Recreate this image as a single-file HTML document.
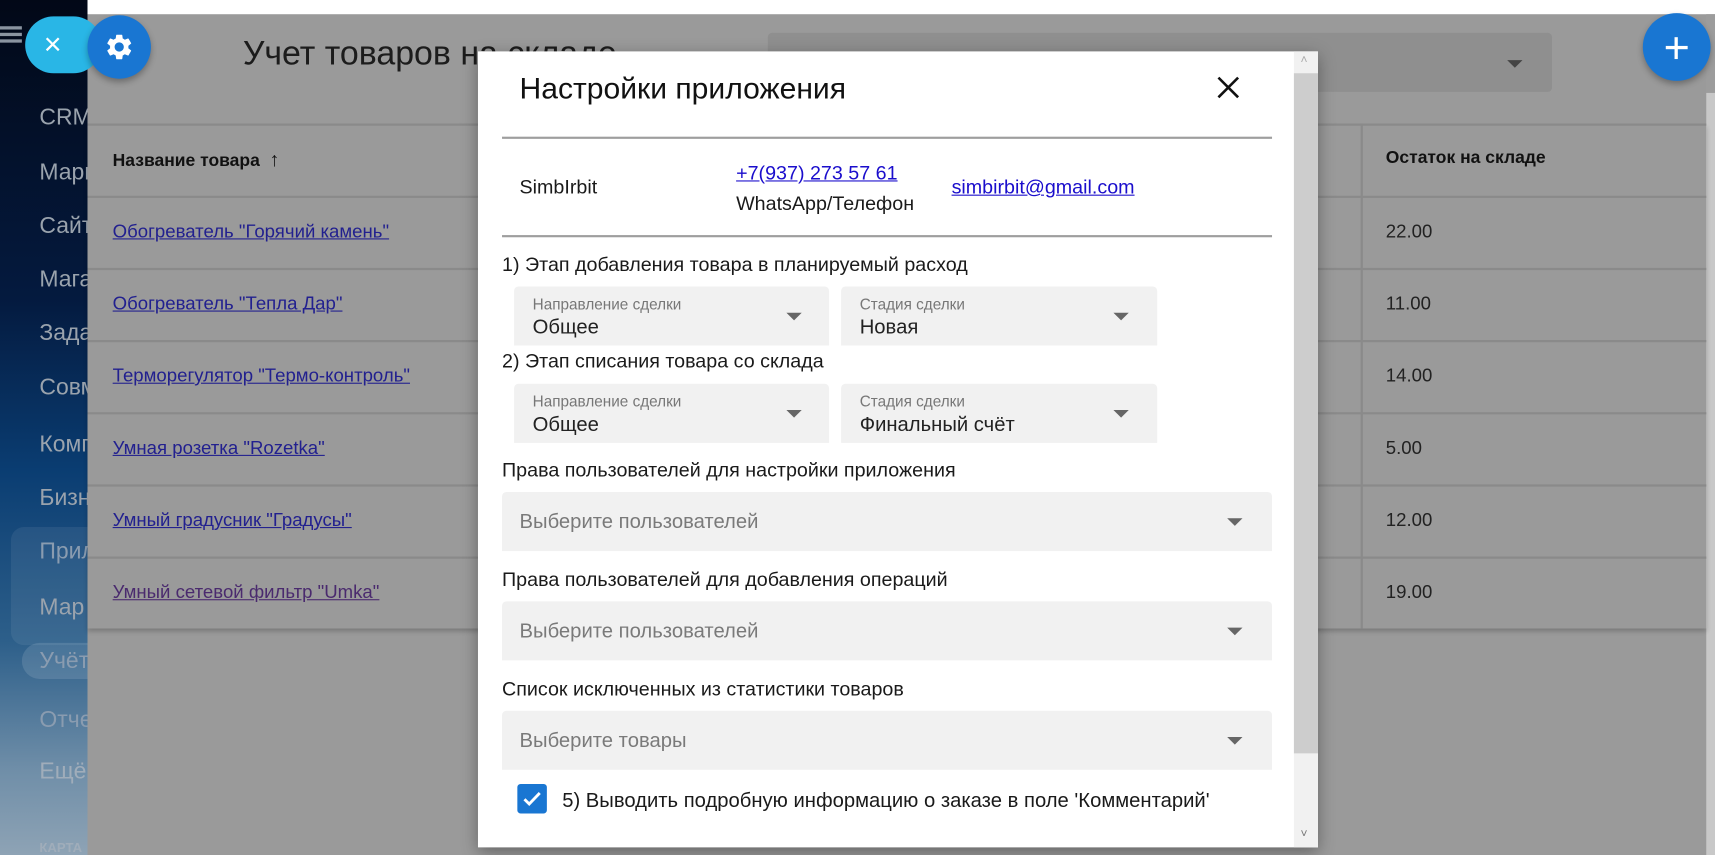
<!DOCTYPE html>
<html><head><meta charset="utf-8"><style>
*{box-sizing:border-box;margin:0;padding:0}
html,body{width:1715px;height:855px;overflow:hidden;background:#999}
#w{position:absolute;left:0;top:0;width:1568px;height:782px;transform:scale(1.09375,1.0934);transform-origin:0 0;font-family:"Liberation Sans",sans-serif;background:#9a9a9a;overflow:hidden}
.a{position:absolute}
#side{left:0;top:0;width:80px;height:782px;overflow:hidden;background:linear-gradient(180deg,#020817 0%,#041a3f 35%,#0a3d72 55%,#2d5f8a 75%,#6f8ea8 90%,#8ea3b5 100%)}
.si{position:absolute;left:36px;font-size:21px;color:#9aa3ad;white-space:nowrap}
.lk{position:absolute;left:103px;font-size:17px;color:#22208f;text-decoration:underline;white-space:nowrap}
.val{position:absolute;left:1267px;font-size:17px;color:#222}
.hl{position:absolute;left:80px;width:1480px;height:2px;background:#8a8a8a}
#modal{left:437px;top:47px;width:768px;height:728px;background:#fff;box-shadow:0 4px 14px rgba(0,0,0,.35)}
.t{position:absolute;color:#1a1a1a;font-size:18px;white-space:nowrap}
.sel{position:absolute;background:#f1f1f1;border-radius:4px 4px 0 0}
.sel .lb{position:absolute;left:17px;top:8px;font-size:14px;color:#777;white-space:nowrap}
.sel .v{position:absolute;left:17px;top:26px;font-size:18.5px;color:#222;white-space:nowrap}
.sel .ph{position:absolute;left:16px;top:16px;font-size:18.5px;color:#7a7a7a;white-space:nowrap}
.arr{position:absolute;width:0;height:0;border-left:7px solid transparent;border-right:7px solid transparent;border-top:7px solid #666}
</style></head><body><div id="w">
<div id="side" class="a">
<div class="a" style="left:0;top:30px;width:20px;height:3px;background:#8a94a0;box-shadow:0 6px 0 #8a94a0,0 -6px 0 #8a94a0"></div>
<div class="si" style="top:96px">CRM</div>
<div class="si" style="top:146px">Марк</div>
<div class="si" style="top:195px">Сайт</div>
<div class="si" style="top:244px">Мага</div>
<div class="si" style="top:293px">Зада</div>
<div class="si" style="top:343px">Совм</div>
<div class="si" style="top:395px">Комп</div>
<div class="si" style="top:444px">Бизн</div>
<div class="a" style="left:10px;top:482px;width:90px;height:108px;border-radius:12px;background:rgba(255,255,255,.07)"></div>
<div class="si" style="top:493px;color:#8a9cb0">Прил</div>
<div class="si" style="top:544px">Мар</div>
<div class="a" style="left:20px;top:588px;width:90px;height:33px;border-radius:17px;background:rgba(255,255,255,.12)"></div>
<div class="si" style="top:593px;color:#8a9cb0">Учёт</div>
<div class="si" style="top:647px;color:#8a9cb0">Отче</div>
<div class="si" style="top:694px;color:#a0adba">Ещё</div>
<div class="si" style="top:768px;font-size:12px;font-weight:bold;color:#a0adba">КАРТА</div>
</div>
<div class="a" style="left:23px;top:15px;width:70px;height:52px;border-radius:26px;background:#29b6e6"></div>
<div class="a" style="left:40px;top:25px;font-size:28px;color:#fff">×</div>
<div class="a" style="left:80px;top:0;width:1488px;height:13px;background:#fff"></div>
<div class="a" style="left:1560px;top:13px;width:8px;height:769px;background:#9c9c9c"></div>
<div class="a" style="left:1560px;top:85px;width:8px;height:697px;background:#c8c8c8"></div>
<div class="a" style="left:222px;top:31px;font-size:31px;color:#1c1c1c;white-space:nowrap">Учет товаров на складе</div>
<div class="a" style="left:702px;top:30px;width:717px;height:54px;background:#8f8f8f;border-radius:4px"></div>
<div class="arr" style="left:1378px;top:55px;border-top-color:#444"></div>
<div class="a" style="left:80px;top:113px;width:1480px;height:462px;box-shadow:0 3px 4px rgba(0,0,0,.2)"></div>
<div class="hl" style="top:113px"></div>
<div class="hl" style="top:179px"></div>
<div class="hl" style="top:245px"></div>
<div class="hl" style="top:311px"></div>
<div class="hl" style="top:377px"></div>
<div class="hl" style="top:443px"></div>
<div class="hl" style="top:509px"></div>
<div class="a" style="left:1244px;top:113px;width:2px;height:462px;background:#8a8a8a"></div>
<div class="a" style="left:103px;top:136px;font-size:16px;font-weight:bold;color:#111;white-space:nowrap">Название товара &nbsp;<span style="font-weight:normal;font-size:18px">↑</span></div>
<div class="a" style="left:1267px;top:136px;font-size:16px;font-weight:bold;color:#111;white-space:nowrap">Остаток на складе</div>
<div class="lk" style="top:202px">Обогреватель "Горячий камень"</div>
<div class="lk" style="top:268px">Обогреватель "Тепла Дар"</div>
<div class="lk" style="top:334px">Терморегулятор "Термо-контроль"</div>
<div class="lk" style="top:400px">Умная розетка "Rozetka"</div>
<div class="lk" style="top:466px">Умный градусник "Градусы"</div>
<div class="lk" style="top:532px;color:#4a2a6e">Умный сетевой фильтр "Umka"</div>
<div class="val" style="top:202px">22.00</div>
<div class="val" style="top:268px">11.00</div>
<div class="val" style="top:334px">14.00</div>
<div class="val" style="top:400px">5.00</div>
<div class="val" style="top:466px">12.00</div>
<div class="val" style="top:532px">19.00</div>
<div class="a" style="left:80px;top:14px;width:58px;height:58px;border-radius:50%;background:#1976d2;box-shadow:0 3px 6px rgba(0,0,0,.3)"></div>
<svg class="a" style="left:95px;top:29px" width="28" height="28" viewBox="0 0 24 24"><path fill="#fff" d="M19.14 12.94c.04-.3.06-.61.06-.94 0-.32-.02-.64-.07-.94l2.030-1.58a.49.49 0 0 0 .12-.61l-1.92-3.32a.488.488 0 0 0-.59-.22l-2.39.96c-.5-.38-1.03-.7-1.62-.94l-.36-2.54a.484.484 0 0 0-.48-.41h-3.84c-.24 0-.43.17-.47.41l-.36 2.54c-.59.24-1.13.57-1.62.94l-2.39-.96c-.22-.08-.47 0-.59.22L2.74 8.87c-.12.21-.08.47.12.61l2.03 1.58c-.05.3-.09.63-.09.94s.02.64.07.94l-2.03 1.58a.49.49 0 0 0-.12.61l1.92 3.32c.12.22.37.29.59.22l2.39-.96c.5.38 1.03.7 1.62.94l.36 2.54c.05.24.24.41.48.41h3.840c.24 0 .44-.17.47-.41l.36-2.54c.59-.24 1.13-.56 1.62-.94l2.39.96c.22.08.47 0 .59-.22l1.92-3.32c.12-.22.07-.47-.12-.61l-2.01-1.58zM12 15.6c-1.98 0-3.6-1.62-3.6-3.6s1.62-3.6 3.6-3.6 3.6 1.62 3.6 3.6-1.62 3.6-3.6 3.6z"/></svg>
<div class="a" style="left:1502px;top:12px;width:62px;height:62px;border-radius:50%;background:#1976d2;box-shadow:0 3px 6px rgba(0,0,0,.3)"></div>
<div class="a" style="left:1523px;top:42px;width:20px;height:3px;background:#fff"></div>
<div class="a" style="left:1531px;top:34px;width:3px;height:20px;background:#fff"></div>

<div id="modal" class="a">
<div class="a" style="left:746px;top:0;width:22px;height:728px;background:#f1f1f1"></div>
<div class="a" style="left:746px;top:20px;width:22px;height:622px;background:#cdcdcd"></div>
<div class="a" style="left:752px;top:2px;font-size:11px;color:#aaa">˄</div>
<div class="a" style="left:752px;top:710px;font-size:11px;color:#777">˅</div>
<div class="t" style="left:38px;top:18px;font-size:27.5px;color:#111">Настройки приложения</div>
<svg class="a" style="left:676px;top:23px" width="20" height="20" viewBox="0 0 20 20"><path d="M1 1L19 19M19 1L1 19" stroke="#111" stroke-width="2.4"/></svg>
<div class="a" style="left:22px;top:78px;width:704px;height:2px;background:#9e9e9e"></div>
<div class="t" style="left:38px;top:114px">SimbIrbit</div>
<div class="t" style="left:236px;top:101px;color:#1a0dcc;text-decoration:underline">+7(937) 273 57 61</div>
<div class="t" style="left:236px;top:129px">WhatsApp/Телефон</div>
<div class="t" style="left:433px;top:114px;color:#1a0dcc;text-decoration:underline">simbirbit@gmail.com</div>
<div class="a" style="left:22px;top:168px;width:704px;height:2px;background:#9e9e9e"></div>
<div class="t" style="left:22px;top:185px">1) Этап добавления товара в планируемый расход</div>
<div class="sel" style="left:33px;top:215px;width:288px;height:54px"><div class="lb">Направление сделки</div><div class="v">Общее</div><div class="arr" style="left:249px;top:24px"></div></div>
<div class="sel" style="left:332px;top:215px;width:289px;height:54px"><div class="lb">Стадия сделки</div><div class="v">Новая</div><div class="arr" style="left:249px;top:24px"></div></div>
<div class="t" style="left:22px;top:273px">2) Этап списания товара со склада</div>
<div class="sel" style="left:33px;top:304px;width:288px;height:54px"><div class="lb">Направление сделки</div><div class="v">Общее</div><div class="arr" style="left:249px;top:24px"></div></div>
<div class="sel" style="left:332px;top:304px;width:289px;height:54px"><div class="lb">Стадия сделки</div><div class="v">Финальный счёт</div><div class="arr" style="left:249px;top:24px"></div></div>
<div class="t" style="left:22px;top:373px">Права пользователей для настройки приложения</div>
<div class="sel" style="left:22px;top:403px;width:704px;height:54px"><div class="ph">Выберите пользователей</div><div class="arr" style="left:663px;top:24px"></div></div>
<div class="t" style="left:22px;top:473px">Права пользователей для добавления операций</div>
<div class="sel" style="left:22px;top:503px;width:704px;height:54px"><div class="ph">Выберите пользователей</div><div class="arr" style="left:663px;top:24px"></div></div>
<div class="t" style="left:22px;top:573px">Список исключенных из статистики товаров</div>
<div class="sel" style="left:22px;top:603px;width:704px;height:54px"><div class="ph">Выберите товары</div><div class="arr" style="left:663px;top:24px"></div></div>
<div class="a" style="left:36px;top:670px;width:27px;height:27px;border-radius:3px;background:#1976d2"></div>
<svg class="a" style="left:39px;top:673px" width="21" height="21" viewBox="0 0 24 24"><path d="M4 12.5l5 5L20 6" fill="none" stroke="#fff" stroke-width="3"/></svg>
<div class="t" style="left:77px;top:674px;font-size:18.5px">5) Выводить подробную информацию о заказе в поле 'Комментарий'</div>
</div>
</div></body></html>
